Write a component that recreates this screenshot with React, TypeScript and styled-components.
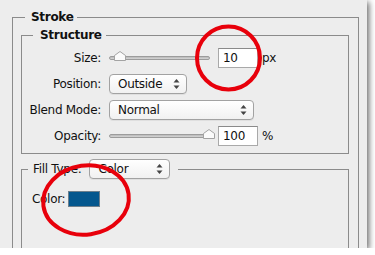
import styled, { createGlobalStyle } from "styled-components";

const GlobalStyle = createGlobalStyle`
  html, body {
    margin: 0;
    background: #ffffff;
  }
  body {
    font-family: "DejaVu Sans", "Liberation Sans", sans-serif;
    font-size: 12px;
    letter-spacing: -0.3px;
    color: #111;
  }
`;

const Panel = styled.div`
  position: relative;
  width: 367px;
  height: 248px;
  padding-top: 9px;
  box-sizing: border-box;
  background: #ededed;
  overflow: hidden;
  box-shadow: 2px 2px 6px rgba(0, 0, 0, 0.6);
`;

const Group = styled.fieldset<{ $left: number; $width: number; $padBottom?: number }>`
  margin: 0 0 0 ${(p) => p.$left}px;
  width: ${(p) => p.$width}px;
  box-sizing: border-box;
  border: 1px solid #8b8b8b;
  padding: 0 0 ${(p) => p.$padBottom ?? 0}px 0;
  min-width: 0;
`;

const OuterGroup = styled(Group)`
  padding-left: 8px;
  padding-right: 9px;
  height: 260px;
`;

const Legend = styled.legend<{ $ml: number; $pl: number; $pr: number }>`
  margin-left: ${(p) => p.$ml}px;
  padding: 0 ${(p) => p.$pr}px 0 ${(p) => p.$pl}px;
  font-weight: bold;
  line-height: 16px;
  height: 16px;
`;

const FillLegend = styled.legend`
  margin-left: 6px;
  padding: 0 8px 0 5px;
  display: flex;
  align-items: center;
  gap: 8px;
`;

const InnerGroup = styled(Group)`
  margin-top: 2px;
`;

const FillGroup = styled(Group)`
  margin-top: 5px;
  height: 120px;
`;

const Rows = styled.div`
  display: flex;
  flex-direction: column;
  gap: 6px;
  padding-top: 5px;
`;

const Row = styled.div`
  display: grid;
  grid-template-columns: 79px 101px 40px max-content;
  justify-content: start;
  align-items: center;
  column-gap: 8px;
  height: 20px;
`;

const Label = styled.span`
  text-align: right;
  white-space: nowrap;
`;

const Track = styled.div`
  position: relative;
  width: 101px;
  height: 4px;
  border-radius: 2px;
  border: 1px solid #9c9c9c;
  box-sizing: border-box;
  background: linear-gradient(#b9b9b9, #d6d6d6);
`;

const Thumb = styled.svg`
  position: absolute;
  top: -6px;
`;

const NumberBox = styled.div`
  width: 40px;
  height: 20px;
  box-sizing: border-box;
  background: #fff;
  border: 1px solid #a9a9a9;
  border-top-color: #8a8a8a;
  padding-left: 4px;
  line-height: 18px;
`;

const Unit = styled.span`
  margin-left: -4px;
`;

const SelectBox = styled.div<{ $width: number }>`
  width: ${(p) => p.$width}px;
  height: 20px;
  box-sizing: border-box;
  border: 1px solid #a2a2a2;
  border-radius: 4px;
  background: linear-gradient(#ffffff, #f1f1f1);
  box-shadow: 0 1px 0 rgba(0, 0, 0, 0.06);
  padding: 0 6px 0 8px;
  line-height: 18px;
  display: flex;
  align-items: center;
  justify-content: space-between;
  grid-column: span 3;
  justify-self: start;
`;

const ColorRow = styled.div`
  display: flex;
  align-items: center;
  gap: 3px;
  margin: 12px 0 0 10px;
`;

const Swatch = styled.div`
  width: 32px;
  height: 16px;
  box-sizing: border-box;
  border: 1px solid #6d7f8c;
  background: #04578e;
`;

const Marks = styled.svg`
  position: absolute;
  left: 0;
  top: 0;
  pointer-events: none;
`;

const Arrows = () => (
  <svg width="7" height="12" viewBox="0 0 7 12">
    <path d="M3.5 1 L6.5 4.5 L0.5 4.5 Z" fill="#444" />
    <path d="M3.5 11 L6.5 7.5 L0.5 7.5 Z" fill="#444" />
  </svg>
);

const Slider = ({ at }: { at: number }) => (
  <Track>
    <Thumb width="12" height="10" viewBox="0 0 12 10" style={{ left: at - 6 }}>
      <path d="M0.5 9.5 L0.5 4.5 L6 0.5 L11.5 4.5 L11.5 9.5 Z" fill="#fbfbfb" stroke="#a3a3a3" />
    </Thumb>
  </Track>
);

export default function App() {
  return (
    <>
      <GlobalStyle />
      <Panel>
        <OuterGroup $left={12} $width={347}>
          <Legend $ml={4} $pl={6} $pr={3}>
            Stroke
          </Legend>
          <InnerGroup $left={0} $width={328} $padBottom={7}>
            <Legend $ml={11} $pl={7} $pr={4}>
              Structure
            </Legend>
            <Rows>
              <Row>
                <Label>Size:</Label>
                <Slider at={10} />
                <NumberBox>10</NumberBox>
                <Unit>px</Unit>
              </Row>
              <Row>
                <Label>Position:</Label>
                <SelectBox $width={78}>
                  Outside
                  <Arrows />
                </SelectBox>
              </Row>
              <Row>
                <Label>Blend Mode:</Label>
                <SelectBox $width={145}>
                  Normal
                  <Arrows />
                </SelectBox>
              </Row>
              <Row>
                <Label>Opacity:</Label>
                <Slider at={99} />
                <NumberBox>100</NumberBox>
                <Unit>%</Unit>
              </Row>
            </Rows>
          </InnerGroup>
          <FillGroup $left={0} $width={328}>
            <FillLegend>
              Fill Type:
              <SelectBox $width={81}>
                Color
                <Arrows />
              </SelectBox>
            </FillLegend>
            <ColorRow>
              Color:
              <Swatch />
            </ColorRow>
          </FillGroup>
        </OuterGroup>
        <Marks width="367" height="248" viewBox="0 0 367 248">
          <circle cx="228.5" cy="58" r="31.5" fill="none" stroke="#e8000b" strokeWidth="4" />
          <ellipse
            cx="86"
            cy="200"
            rx="43"
            ry="34.5"
            transform="rotate(-8 86 200)"
            fill="none"
            stroke="#e8000b"
            strokeWidth="4"
          />
        </Marks>
      </Panel>
    </>
  );
}
